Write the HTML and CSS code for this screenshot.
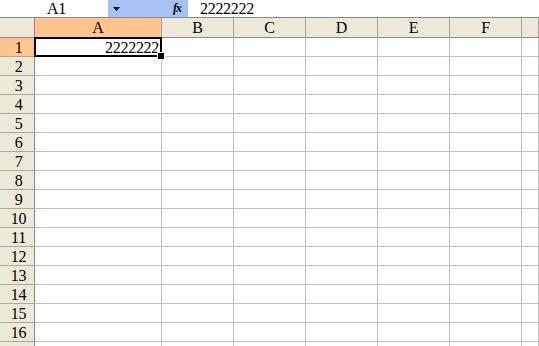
FILE: index.html
```html
<!DOCTYPE html>
<html>
<head>
<meta charset="utf-8">
<link rel="stylesheet" href="styles.css">
</head>
<body>
<div class="fbar">
  <div class="namebox">A1</div>
  <div class="dropbtn"><svg width="7" height="4" viewBox="0 0 7 4"><path d="M0 0h7L3.5 4z" fill="#000"/></svg></div>
  <div class="fxbtn"><span class="fx">fx</span></div>
  <div class="formula">2222222</div>
</div>
<div class="sheet">
  <div class="hd corner"></div>
  <div class="hd col sel">A</div>
  <div class="hd col">B</div>
  <div class="hd col">C</div>
  <div class="hd col">D</div>
  <div class="hd col">E</div>
  <div class="hd col">F</div>
  <div class="hd col"></div>

  <div class="rh sel">1</div><div class="c active">2222222</div><div class="c"></div><div class="c"></div><div class="c"></div><div class="c"></div><div class="c"></div><div class="c"></div>
  <div class="rh">2</div><div class="c"></div><div class="c"></div><div class="c"></div><div class="c"></div><div class="c"></div><div class="c"></div><div class="c"></div>
  <div class="rh">3</div><div class="c"></div><div class="c"></div><div class="c"></div><div class="c"></div><div class="c"></div><div class="c"></div><div class="c"></div>
  <div class="rh">4</div><div class="c"></div><div class="c"></div><div class="c"></div><div class="c"></div><div class="c"></div><div class="c"></div><div class="c"></div>
  <div class="rh">5</div><div class="c"></div><div class="c"></div><div class="c"></div><div class="c"></div><div class="c"></div><div class="c"></div><div class="c"></div>
  <div class="rh">6</div><div class="c"></div><div class="c"></div><div class="c"></div><div class="c"></div><div class="c"></div><div class="c"></div><div class="c"></div>
  <div class="rh">7</div><div class="c"></div><div class="c"></div><div class="c"></div><div class="c"></div><div class="c"></div><div class="c"></div><div class="c"></div>
  <div class="rh">8</div><div class="c"></div><div class="c"></div><div class="c"></div><div class="c"></div><div class="c"></div><div class="c"></div><div class="c"></div>
  <div class="rh">9</div><div class="c"></div><div class="c"></div><div class="c"></div><div class="c"></div><div class="c"></div><div class="c"></div><div class="c"></div>
  <div class="rh">10</div><div class="c"></div><div class="c"></div><div class="c"></div><div class="c"></div><div class="c"></div><div class="c"></div><div class="c"></div>
  <div class="rh">11</div><div class="c"></div><div class="c"></div><div class="c"></div><div class="c"></div><div class="c"></div><div class="c"></div><div class="c"></div>
  <div class="rh">12</div><div class="c"></div><div class="c"></div><div class="c"></div><div class="c"></div><div class="c"></div><div class="c"></div><div class="c"></div>
  <div class="rh">13</div><div class="c"></div><div class="c"></div><div class="c"></div><div class="c"></div><div class="c"></div><div class="c"></div><div class="c"></div>
  <div class="rh">14</div><div class="c"></div><div class="c"></div><div class="c"></div><div class="c"></div><div class="c"></div><div class="c"></div><div class="c"></div>
  <div class="rh">15</div><div class="c"></div><div class="c"></div><div class="c"></div><div class="c"></div><div class="c"></div><div class="c"></div><div class="c"></div>
  <div class="rh">16</div><div class="c"></div><div class="c"></div><div class="c"></div><div class="c"></div><div class="c"></div><div class="c"></div><div class="c"></div>
  <div class="rh"></div><div class="c"></div><div class="c"></div><div class="c"></div><div class="c"></div><div class="c"></div><div class="c"></div><div class="c"></div>
</div>
</body>
</html>
```
FILE: styles.css
```css
* { box-sizing: border-box; }
html, body { margin: 0; padding: 0; background: #fff; overflow: hidden; }
body {
  width: 539px; height: 346px;
  font-family: "Liberation Serif", serif;
  font-size: 16px; letter-spacing: -0.3px; color: #000;
}
.fbar {
  display: flex; height: 18px;
  border-bottom: 1px solid #8a8a8a;
  background: #fff;
}
.namebox {
  width: 108px; height: 17px; line-height: 18px;
  padding-left: 47px;
}
.dropbtn {
  width: 54px; height: 17px; background: #a6c2f2;
  display: flex; align-items: center; padding-left: 5px;
}
.fxbtn {
  width: 26px; height: 17px; background: #a6c2f2;
  display: flex; align-items: center; justify-content: center;
  padding-left: 4px;
}
.fx {
  font-family: "Liberation Serif", serif; font-style: italic;
  font-size: 12px; font-weight: bold; letter-spacing: -1px;
}
.formula {
  height: 17px; line-height: 18px; padding-left: 12px;
}
.sheet {
  display: grid;
  grid-template-columns: 35px 127px 72px 72px 72px 72px 72px 17px;
  grid-template-rows: 20px;
  grid-auto-rows: 19px;
  height: 328px;
  overflow: hidden;
}
.hd {
  background: #ece9d8;
  border-bottom: 1px solid #8a8a8a;
  border-right: 1px solid #aca899;
  line-height: 20px; text-align: center;
}
.corner { border-right-color: #8a8a8a; }
.hd.sel { background: #ffc58c; }
.rh {
  background: #ece9d8;
  border-right: 1px solid #8a8a8a;
  border-bottom: 1px solid #aca899;
  text-align: center; line-height: 19px;
  padding-left: 3px;
}
.rh.sel { background: #ffc58c; }
.c {
  border-right: 1px solid #c0c0c0;
  border-bottom: 1px solid #c0c0c0;
  line-height: 19px;
}
.active {
  position: relative; text-align: right; padding-right: 2px;
}
.active::before {
  content: ""; position: absolute;
  left: -1px; top: -1px; right: -1px; bottom: -1px;
  border: 2px solid #000;
}
.active::after {
  content: ""; position: absolute;
  right: -4px; bottom: -4px; width: 6px; height: 6px;
  background: #000; border: 1px solid #fff;
}
```
